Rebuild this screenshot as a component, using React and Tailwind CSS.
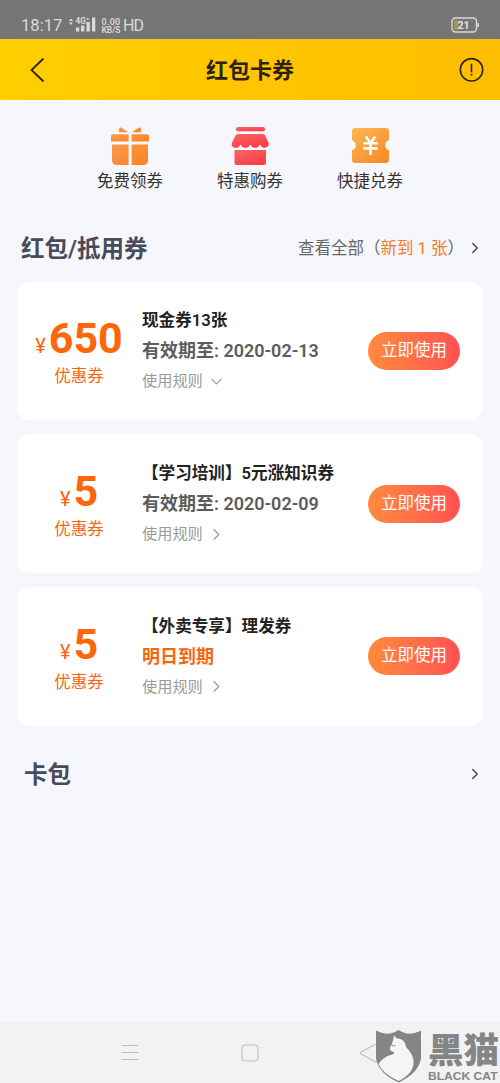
import { ChevronDown, ChevronRight } from 'lucide-react';

const shortcuts = [
  { id: 'free', label: '免费领券', icon: GiftIcon },
  { id: 'deal', label: '特惠购券', icon: ShopIcon },
  { id: 'exchange', label: '快捷兑券', icon: TicketIcon },
];

const coupons = [
  { id: 1, amount: 650, title: '现金券13张', expiry: '有效期至: 2020-02-13', open: true },
  { id: 2, amount: 5, title: '【学习培训】5元涨知识券', expiry: '有效期至: 2020-02-09' },
  { id: 3, amount: 5, title: '【外卖专享】理发券', expiry: '明日到期', urgent: true },
];

function GiftIcon() {
  return (
    <svg width="40" height="40" viewBox="0 0 40 40">
      <defs>
        <linearGradient id="gift" x1="0" y1="0" x2="1" y2="1">
          <stop offset="0" stopColor="#fa9a48" />
          <stop offset="1" stopColor="#fb8126" />
        </linearGradient>
      </defs>
      <g fill="url(#gift)">
        <path d="M9 6.2V3Q9 0.8 11 1.6L18 6.2ZM31 6.2V3Q31 0.8 29 1.6L22 6.2Z" />
        <path d="M3 8.2H18.6V15.6H1V10.2Q1 8.2 3 8.2ZM21.6 8.2H37Q39 8.2 39 10.2V15.6H21.6Z" />
        <path d="M2 18.6H18.6V39H7Q2 39 2 34ZM21.6 18.6H38V34Q38 39 33 39H21.6Z" />
      </g>
    </svg>
  );
}

function ShopIcon() {
  return (
    <svg width="40" height="40" viewBox="0 0 40 40">
      <defs>
        <linearGradient id="shop" x1="0" y1="0" x2="0.6" y2="1">
          <stop offset="0" stopColor="#f2686a" />
          <stop offset="1" stopColor="#ff3d48" />
        </linearGradient>
      </defs>
      <g fill="url(#shop)">
        <rect x="6" y="1" width="29" height="4.2" rx="2" />
        <path d="M8 8H33Q34.5 8 35.2 9.5L38.6 17Q39.3 21.5 34.5 21.7H5.5Q1 21.5 1.8 17L5.5 9.5Q6.3 8 8 8Z" />
        <path d="M4.5 24H36V37Q36 39 34 39H6.5Q4.5 39 4.5 37Z" />
      </g>
      <g fill="#f6f7fc">
        <path d="M7.8 22.5L10.6 18.6L13.4 22.5ZM17.5 22.5L20.3 18.6L23.1 22.5ZM27.2 22.5L30 18.6L32.8 22.5Z" />
        <path d="M7.8 21.2H13.4V24H7.8ZM17.5 21.2H23.1V24H17.5ZM27.2 21.2H32.8V24H27.2Z" />
      </g>
    </svg>
  );
}

function TicketIcon() {
  return (
    <svg width="40" height="40" viewBox="0 0 40 40">
      <defs>
        <linearGradient id="ticket" x1="0" y1="0" x2="0.8" y2="1">
          <stop offset="0" stopColor="#fdb654" />
          <stop offset="1" stopColor="#f88c2c" />
        </linearGradient>
      </defs>
      <path
        fill="url(#ticket)"
        d="M4 2H36Q39 2 39 5V14.3A5.2 5.2 0 0 0 39 24.3V34Q39 37 36 37H5Q2 37 2 34V24.3A5.2 5.2 0 0 0 2 14.3V5Q2 2 5 2Z"
      />
      <path d="M15.8 10.5L20.5 17L25.2 10.5M13.3 17.3H27.7M13.3 22.4H27.7M20.5 17V29" fill="none" stroke="#fff" strokeWidth="2.6" />
    </svg>
  );
}

function StatusBar() {
  return (
    <div className="h-[39px] bg-[#757575] text-[#dadada] flex items-start justify-between pl-[21px] pr-[21px]">
      <div className="flex items-center pt-[15px] h-[37px]">
        <span className="text-[16.6px] leading-5 w-[48px]">18:17</span>
        <svg className="-mt-[2px]" width="28" height="16" viewBox="0 0 28 16" fill="#dadada">
          <path d="M0 4L2 1.5L4 4ZM0 5.5H4L2 8Z" />
          <text x="6.5" y="7.2" fontSize="8.2" fontWeight="700">4G</text>
          <path d="M17 2.8L18.7 0.8L20.4 2.8Z" />
          <rect x="7" y="10.5" width="3.3" height="4" />
          <rect x="12" y="8.5" width="3.3" height="6" />
          <rect x="17.5" y="5" width="3.3" height="9.5" />
          <rect x="23" y="0.5" width="3.3" height="14" />
        </svg>
        <div className="ml-[3px] w-[22px] text-[9px] font-semibold leading-[8px] text-center whitespace-nowrap">
          <p className="tracking-[0.2px]">0.00</p>
          <p className="text-[8.4px]">KB/S</p>
        </div>
        <span className="ml-px text-[16px] leading-5 tracking-[-0.8px]">HD</span>
      </div>
      <svg className="mt-[17px]" width="28" height="16" viewBox="0 0 28 16">
        <rect x="1" y="1" width="24.5" height="14" rx="3.5" fill="none" stroke="#d8d8d8" strokeWidth="1.4" />
        <rect x="3" y="3" width="4.5" height="10" rx="1" fill="#a3974f" />
        <path d="M26.3 5.5L28 6.5V9.5L26.3 10.5Z" fill="#d8d8d8" />
        <text x="12.6" y="11.8" fontSize="10.5" fontWeight="700" textAnchor="middle" fill="#e2e2e2">21</text>
      </svg>
    </div>
  );
}

function Header() {
  return (
    <header className="h-[61px] shrink-0 bg-gradient-to-r from-[#ffcf00] to-[#ffbd00] grid grid-cols-[1fr_auto_1fr] items-center pl-[29px] pr-4 text-[#2b210c]">
      <svg width="26" height="26" viewBox="0 0 26 26" fill="none" stroke="#2b210c" strokeWidth="1.8">
        <path d="M14.5 1.5L2.5 13L14.5 24.5" />
      </svg>
      <h1 className="-ml-[13px] pt-[2px] text-[22px] leading-[32px] font-bold">红包卡券</h1>
      <svg className="justify-self-end" width="26" height="26" viewBox="0 0 26 26" fill="none" stroke="#2b210c" strokeWidth="1.6">
        <circle cx="13.5" cy="12.8" r="11.2" />
        <path d="M13.5 6.8V15.2M13.5 16.8V18.4" />
      </svg>
    </header>
  );
}

function CouponCard({ coupon }) {
  const Arrow = coupon.open ? ChevronDown : ChevronRight;
  return (
    <div className="h-[138.7px] bg-white rounded-[13px] flex items-center pr-[23px]">
      <div className="w-[124px] mr-px pt-px shrink-0 flex flex-col items-center text-[#f8650f]">
        <div className="flex items-baseline gap-[3px] h-[52px]">
          <span className="text-[20px]">¥</span>
          <span className="text-[43px] leading-[50px] font-bold text-[#ff6509]">{coupon.amount}</span>
        </div>
        <p className="text-[16.5px] leading-6">优惠券</p>
      </div>
      <div className="flex-1 pt-px whitespace-nowrap">
        <p className="text-[16.6px] leading-[30px] font-semibold text-[#222]">{coupon.title}</p>
        <p className={`text-[18px] leading-[30px] font-semibold ${coupon.urgent ? 'text-[#f8650f]' : 'text-[#5c5c5c]'}`}>
          {coupon.expiry}
        </p>
        <p className="flex items-center gap-1 text-[15.2px] leading-[30px] text-[#9a9a9a]">
          使用规则
          <Arrow size={19} strokeWidth={1.5} />
        </p>
      </div>
      <button className="w-[92px] h-[38px] pt-px rounded-full bg-gradient-to-r from-[#ff8a3d] to-[#ff5050] text-white text-[16.5px]">
        立即使用
      </button>
    </div>
  );
}

function NavBar() {
  return (
    <nav className="h-[61px] bg-[#f2f2f2] flex items-center px-[70px]">
      {['M3.5 4.5H20.5M3.5 11.5H20.5M3.5 18.5H20.5', 'M7.5 4H16.5Q20 4 20 7.5V16.5Q20 20 16.5 20H7.5Q4 20 4 16.5V7.5Q4 4 7.5 4Z', 'M17 3.5L3 11Q1.5 12 3 13L17 20.5Q19 21.5 19 19V5Q19 2.5 17 3.5Z'].map((d) => (
        <div key={d} className="w-[120px] flex justify-center">
          <svg width="24" height="24" viewBox="0 0 24 24" fill="none" stroke="#bdbdbd" strokeWidth="1.1">
            <path d={d} />
          </svg>
        </div>
      ))}
    </nav>
  );
}

function Watermark() {
  return (
    <div className="absolute left-[375px] bottom-0 flex text-[#858585]">
      <svg width="47" height="54" viewBox="0 0 47 54">
        <path d="M1 1.5Q13 8 23.5 1Q34 8 46 1.5V29Q44 44 23.5 53.5Q3 44 1 29Z" fill="#858585" />
        <path
          d="M19 6.5L22 9.5Q26.5 9.5 29 12.5Q30.5 14.5 31 18Q39 26 38.5 34Q38 45 23.5 52Q8 45 3.5 35Q8 28 17 25.5Q21 24 18 22.8Q14.5 22 15 18.5Q18 14 19 6.5Z"
          fill="#f5f5f5"
        />
        <path d="M16.5 15.5Q18 18 20.5 16.5" fill="none" stroke="#858585" />
      </svg>
      <div className="ml-[6px] pt-[4px] w-[72px] whitespace-nowrap">
        <p className="text-[35.5px] leading-[37px] font-black">黑猫</p>
        <p className="origin-left scale-x-[1.05] font-['Liberation_Sans'] text-[11.5px] leading-[13px] font-bold">BLACK CAT</p>
      </div>
    </div>
  );
}

export default function App() {
  return (
    <div className="relative w-[500px] h-[1083px] overflow-hidden flex flex-col bg-[#f6f7fc] font-[Roboto,'Noto_Sans_CJK_SC',sans-serif]">
      <StatusBar />
      <Header />
      <main className="flex-1 px-[17px]">
        <div className="flex justify-center pt-[26px]">
          {shortcuts.map((item) => {
            const Icon = item.icon;
            return (
              <div key={item.id} className="w-[120px] flex flex-col items-center">
                <Icon />
                <span className="mt-1 text-[16.5px] leading-6 text-[#333]">{item.label}</span>
              </div>
            );
          })}
        </div>

        <div className="mt-[37px] h-9 flex items-center justify-between pl-1">
          <h2 className="pt-[2px] text-[23.5px] font-semibold text-[#474b5b]">红包/抵用券</h2>
          <div className="flex items-center -mr-px text-[16.5px] text-[#666]">
            <span className="mr-[2px]">
              查看全部（<span className="text-[#f37a22]">新到 1 张</span>）
            </span>
            <ChevronRight size={18} strokeWidth={1.8} className="-mt-[2px] text-[#444]" />
          </div>
        </div>

        <div className="mt-[14.5px] flex flex-col gap-[14px]">
          {coupons.map((coupon) => (
            <CouponCard key={coupon.id} coupon={coupon} />
          ))}
        </div>

        <div className="mt-[30px] h-9 flex items-center justify-between pl-[7px]">
          <h2 className="pt-[4px] text-[23.5px] font-semibold text-[#474b5b]">卡包</h2>
          <ChevronRight size={18} strokeWidth={1.8} className="-mr-px text-[#444]" />
        </div>
      </main>
      <NavBar />
      <Watermark />
    </div>
  );
}
